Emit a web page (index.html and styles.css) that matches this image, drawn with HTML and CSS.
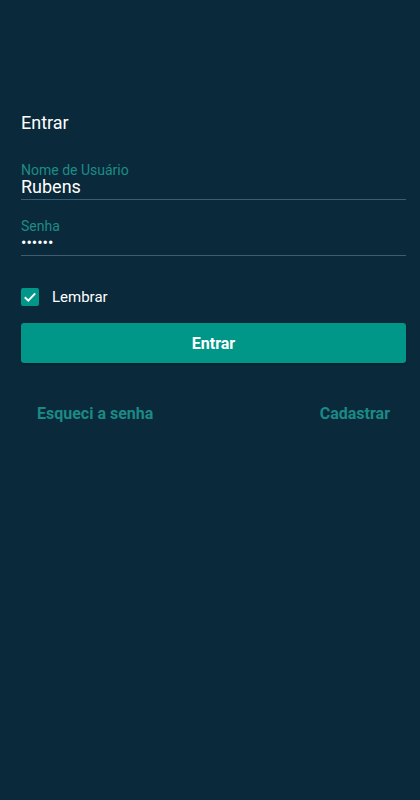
FILE: index.html
```html
<!DOCTYPE html>
<html lang="pt">
<head>
  <meta charset="UTF-8">
  <meta name="viewport" content="width=device-width, initial-scale=1.0">
  <title>Entrar</title>
  <link rel="stylesheet" href="styles.css">
</head>
<body>
  <main class="login">
    <h1 class="title">Entrar</h1>
    <div class="field">
      <label class="field-label">Nome de Usuário</label>
      <div class="field-value">Rubens</div>
    </div>
    <div class="field">
      <label class="field-label">Senha</label>
      <div class="field-value password">••••••</div>
    </div>
    <div class="remember">
      <span class="check">
        <svg width="14" height="14" viewBox="0 0 14 14"><path d="M1.8 7.2 L5.3 10.6 L12.2 3.4" fill="none" stroke="#fff" stroke-width="2"/></svg>
      </span>
      <span class="remember-text">Lembrar</span>
    </div>
    <button class="btn">Entrar</button>
    <div class="links">
      <a href="#">Esqueci a senha</a>
      <a href="#">Cadastrar</a>
    </div>
  </main>
</body>
</html>
```
FILE: styles.css
```css
html, body {
  margin: 0;
  height: 100%;
}
body {
  background: #0a293b;
  font-family: Roboto, 'Noto Sans', sans-serif;
  color: #fff;
}
.login {
  padding: 111px 14px 0 21px;
}
.title {
  margin: 0 0 28px;
  font-size: 18px;
  font-weight: 400;
  line-height: 24px;
}
.field {
  border-bottom: 1.5px solid #3d5e70;
  margin-bottom: 19px;
}
.field-label {
  display: block;
  color: #1e8c86;
  font-size: 14px;
  line-height: 14px;
}
.field-value {
  font-size: 18px;
  line-height: 20px;
  padding-bottom: 2px;
}
.password {
  font-size: 16px;
  letter-spacing: 0;
}
.remember {
  display: flex;
  align-items: center;
  margin-top: 32px;
}
.check {
  width: 18px;
  height: 18px;
  background: #009688;
  border-radius: 2px;
  display: flex;
  align-items: center;
  justify-content: center;
}
.remember-text {
  margin-left: 13px;
  font-size: 15px;
}
.btn {
  display: block;
  width: 100%;
  height: 40px;
  margin-top: 17px;
  background: #009688;
  border: 0;
  border-radius: 3px;
  color: #fff;
  font-family: inherit;
  font-size: 16px;
  font-weight: 700;
  box-shadow: 0 1px 2px rgba(0,0,0,0.3);
}
.links {
  display: flex;
  justify-content: space-between;
  padding: 0 16px;
  margin-top: 41px;
}
.links a {
  color: #1b8a85;
  text-decoration: none;
  font-size: 16px;
  font-weight: 700;
}
```
